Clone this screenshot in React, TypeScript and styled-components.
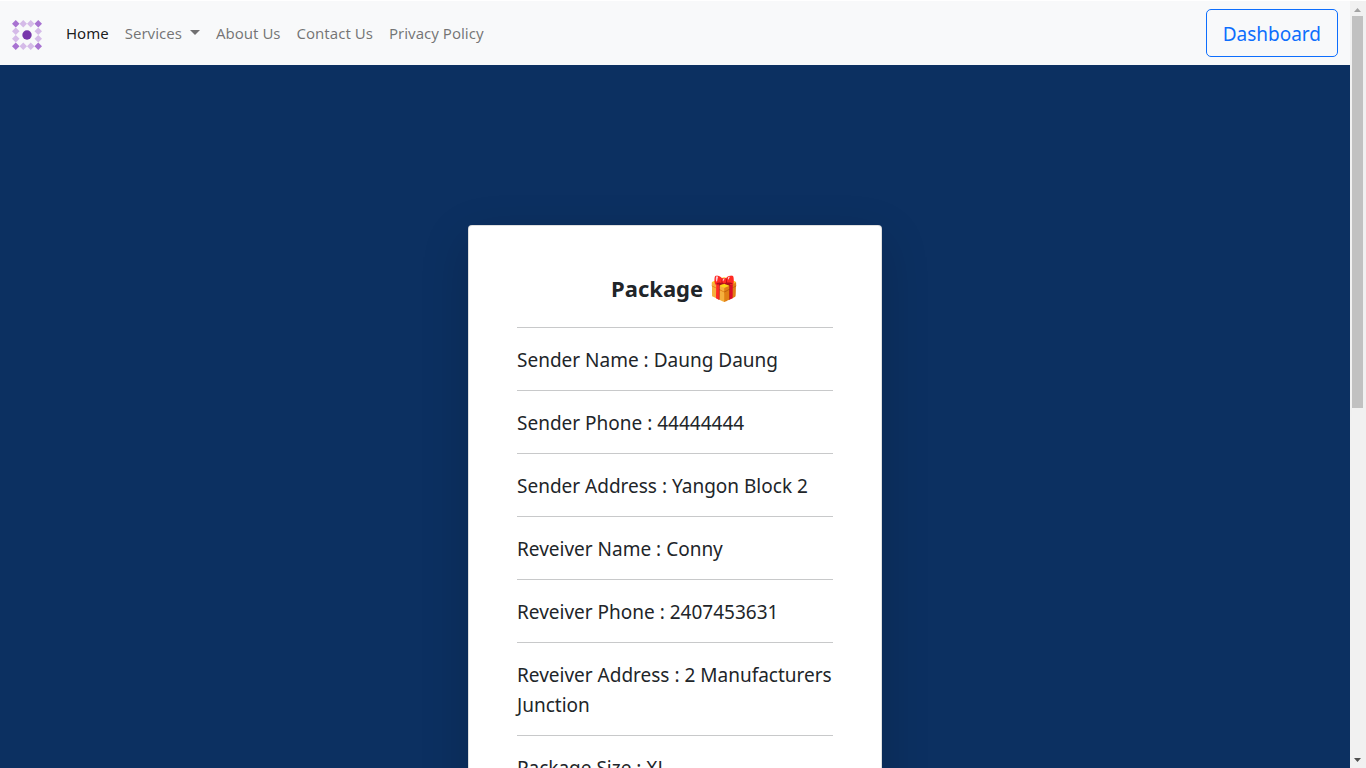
import React from 'react';
import styled, { createGlobalStyle } from 'styled-components';

const GlobalStyle = createGlobalStyle`
  *, *::before, *::after { box-sizing: border-box; }
  body {
    margin: 0;
    background: #ffffff;
    color: #212529;
    font-family: "Noto Sans", "Open Sans", sans-serif;
    font-size: 15px;
    line-height: 24px;
  }
`;

const Frame = styled.div`
  display: flex;
  height: 100vh;
  padding-top: 1px;
`;

const Page = styled.div`
  flex: 1;
  min-width: 0;
  overflow-y: auto;
  scrollbar-width: none;
  background: #0c3061;
`;

const Navbar = styled.nav`
  display: flex;
  align-items: center;
  min-height: 64px;
  padding: 8px 12px;
  background: #f8f9fa;
`;

const Brand = styled.a`
  display: flex;
  margin-right: 16px;
  padding-top: 4px;
`;

const NavList = styled.ul`
  display: flex;
  flex: 1;
  margin: 0;
  padding: 0;
  list-style: none;
`;

const NavLink = styled.a<{ $active?: boolean }>`
  display: flex;
  align-items: center;
  gap: 8px;
  padding: 8px;
  color: ${({ $active }) => ($active ? 'rgba(0, 0, 0, 0.9)' : 'rgba(0, 0, 0, 0.55)')};
  text-decoration: none;
  white-space: nowrap;
`;

const Caret = styled.span`
  margin-bottom: 2px;
  border: 5px solid transparent;
  border-top-color: currentColor;
  border-bottom: 0;
`;

const DashboardButton = styled.button`
  padding: 9px 16px 7px;
  border: 1px solid #0d6efd;
  border-radius: 5px;
  background: transparent;
  color: #0d6efd;
  font-family: inherit;
  font-size: 19px;
  line-height: 30px;
  cursor: pointer;
`;

const Main = styled.main`
  display: flex;
  justify-content: center;
  padding: 160px 12px;
`;

const Card = styled.section`
  width: 100%;
  max-width: 414px;
  padding: 48px;
  border: 1px solid rgba(0, 0, 0, 0.125);
  border-radius: 4px;
  background: #ffffff;
  box-shadow: 0 16px 48px rgba(0, 0, 0, 0.175);
`;

const Title = styled.h1`
  margin: 0 0 24px;
  font-size: 22px;
  font-weight: 700;
  line-height: 29px;
  text-align: center;
`;

const Emoji = styled.span`
  font-size: 24px;
  line-height: 24px;
`;

const Detail = styled.p`
  margin: 0;
  padding: 17px 0 15px;
  border-top: 1px solid #c8c9ca;
  font-size: 19px;
  line-height: 30px;
`;

const Scrollbar = styled.div`
  display: flex;
  flex-direction: column;
  align-items: center;
  width: 16px;
  padding: 7px 1px 6px 0;
  background: #f1f1f1;
`;

const Thumb = styled.div`
  flex: 0 0 52%;
  width: 11px;
  margin: 4px 0 auto;
  background: #c1c1c1;
`;

const corners = ['0,0', '3,0', '0,3', '3,3'];
const cells = [0, 1, 2, 3]
  .flatMap((x) => [0, 1, 2, 3].map((y) => ({ x, y })))
  .filter(({ x, y }) => x === 0 || x === 3 || y === 0 || y === 3);

const Logo = () => (
  <svg width="30" height="30" viewBox="0 0 30 30" aria-hidden="true">
    {cells.map(({ x, y }) => (
      <path
        key={`${x},${y}`}
        d={`M${3.75 + x * 7.5} ${y * 7.5}l3.75 3.75l-3.75 3.75l-3.75 -3.75z`}
        fill={corners.includes(`${x},${y}`) ? '#a873d1' : '#d5bbe8'}
      />
    ))}
    <circle cx="15" cy="15" r="4.7" fill="#7837ab" />
  </svg>
);

const details = [
  ['Sender Name', 'Daung Daung'],
  ['Sender Phone', '44444444'],
  ['Sender Address', 'Yangon Block 2'],
  ['Reveiver Name', 'Conny'],
  ['Reveiver Phone', '2407453631'],
  ['Reveiver Address', '2 Manufacturers Junction'],
  ['Package Size', 'XL'],
];

export default function App() {
  return (
    <>
      <GlobalStyle />
      <Frame>
        <Page>
          <Navbar>
            <Brand href="#" aria-label="Brand"><Logo /></Brand>
            <NavList>
              <li><NavLink href="#" $active>Home</NavLink></li>
              <li><NavLink href="#">Services <Caret /></NavLink></li>
              <li><NavLink href="#">About Us</NavLink></li>
              <li><NavLink href="#">Contact Us</NavLink></li>
              <li><NavLink href="#">Privacy Policy</NavLink></li>
            </NavList>
            <DashboardButton type="button">Dashboard</DashboardButton>
          </Navbar>
          <Main>
            <Card>
              <Title>Package <Emoji>🎁</Emoji></Title>
              {details.map(([label, value]) => (
                <Detail key={label}>{`${label} : ${value}`}</Detail>
              ))}
            </Card>
          </Main>
        </Page>
        <Scrollbar aria-hidden="true">
          <svg width="7" height="4" viewBox="0 0 7 4"><path d="M0 4L3.5 0L7 4z" fill="#a3a3a3" /></svg>
          <Thumb />
          <svg width="7" height="4" viewBox="0 0 7 4"><path d="M0 0L3.5 4L7 0z" fill="#505050" /></svg>
        </Scrollbar>
      </Frame>
    </>
  );
}
